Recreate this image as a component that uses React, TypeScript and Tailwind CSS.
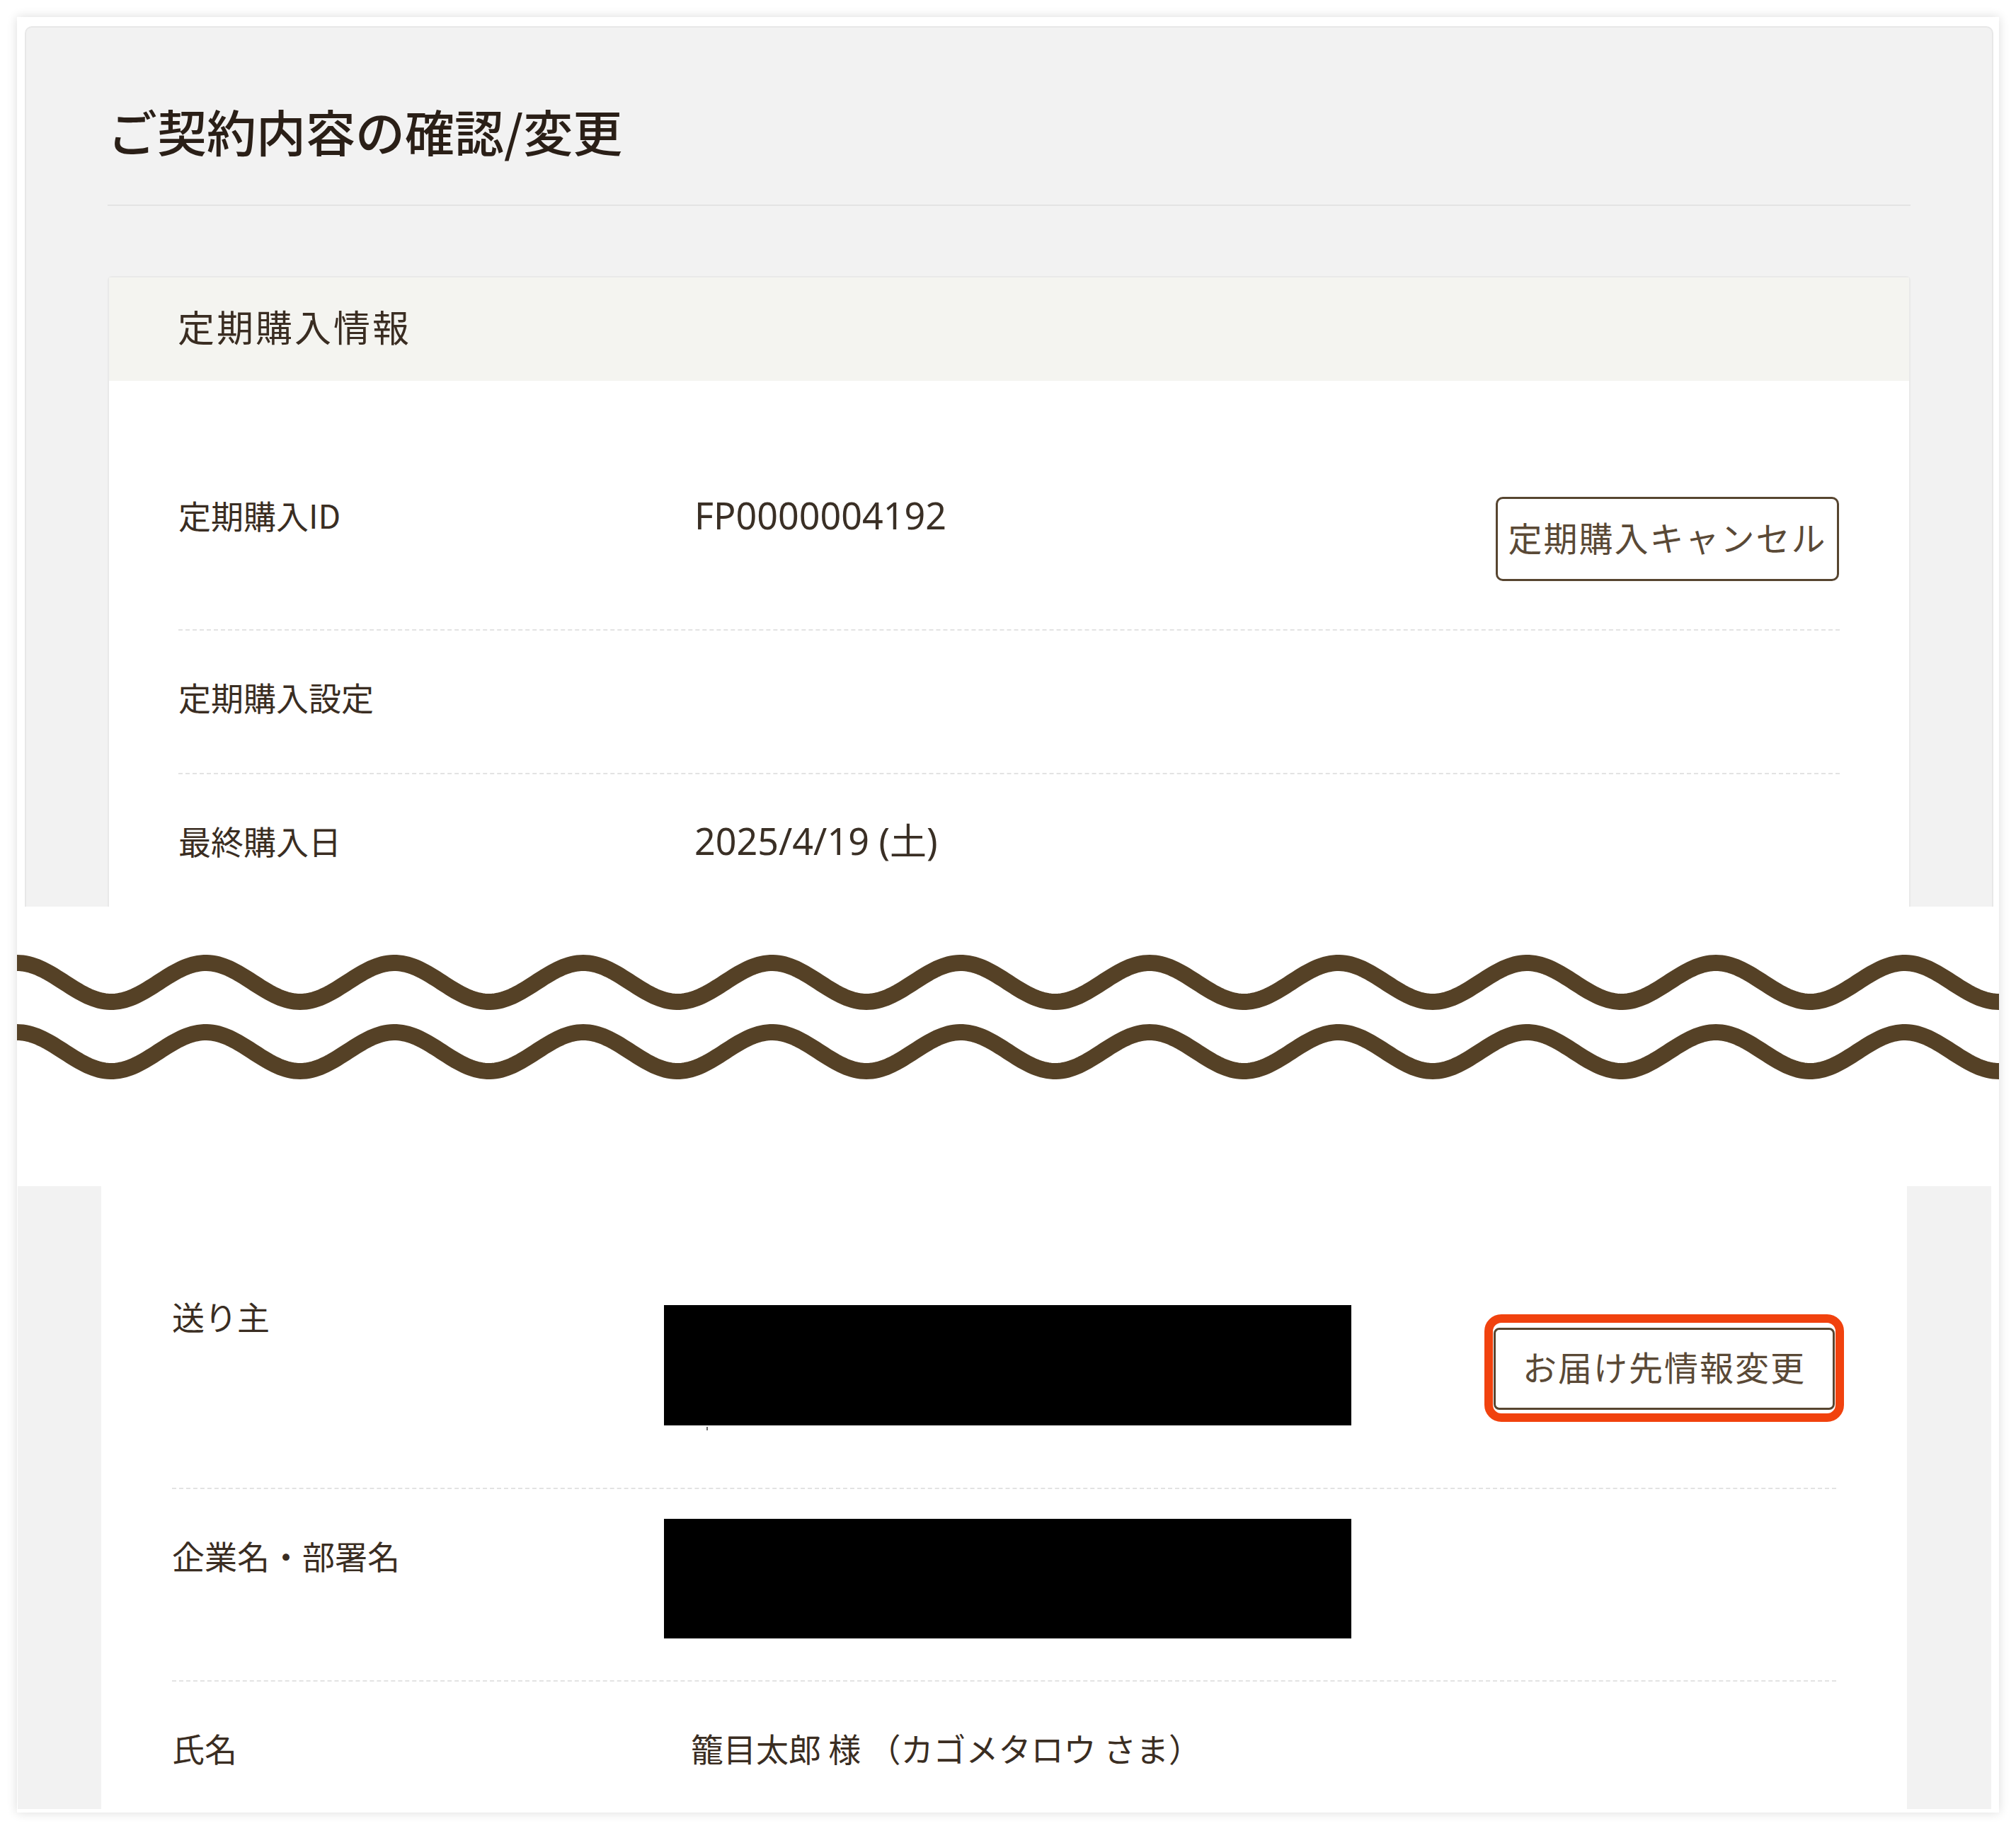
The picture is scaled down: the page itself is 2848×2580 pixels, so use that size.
import React from "react";

function wavePath(cy: number, amp: number, width: number, period: number) {
  const pts: string[] = [];
  for (let x = -4; x <= width + 4; x += 4) {
    const y = cy - amp * Math.cos((2 * Math.PI * x) / period);
    pts.push(`${x === -4 ? "M" : "L"}${x.toFixed(1)} ${y.toFixed(2)}`);
  }
  return pts.join(" ");
}

function Wave() {
  const W = 2800;
  const P = W / 10.5;
  return (
    <svg width={W} height={395} viewBox={`0 0 ${W} 395`} className="block">
      <path d={wavePath(107, 27.5, W, P)} fill="none" stroke="#554126" strokeWidth={23} />
      <path d={wavePath(205, 27.5, W, P)} fill="none" stroke="#554126" strokeWidth={23} />
    </svg>
  );
}

const shift = "-mt-[7px] mb-[7px]";
const labelCls = `shrink-0 ${shift} text-[46px] leading-[69px] text-[#3a2d22] font-[Noto_Sans_CJK_JP,sans-serif]`;
const valueLatin = `flex-1 ${shift} text-[52px] leading-[69px] text-[#3a2f25] font-[Noto_Sans,Noto_Sans_CJK_JP,sans-serif]`;
const valueJa = `flex-1 ${shift} text-[46px] leading-[69px] text-[#3a2d22] font-[Noto_Sans_CJK_JP,sans-serif]`;

export default function App() {
  return (
    <div className="w-[2848px] h-[2580px] bg-white pt-[24px] pl-[24px] font-[Noto_Sans_CJK_JP,sans-serif]">
      <div className="w-[2800px] bg-white shadow-[0_0_14px_rgba(0,0,0,0.14)] flex flex-col pb-[5px]">
        {/* Top part */}
        <div className="pt-[13px] pl-[11px] pr-[8px]">
          <div className="h-[1244px] overflow-hidden bg-[#f2f2f2] border-2 border-b-0 border-[#e7e7e7] rounded-t-[10px] pt-[93px] pl-[115px] pr-[115px]">
            <h1 className="text-[70px] leading-[105px] font-medium text-[#2a1f17]">ご契約内容の確認/変更</h1>
            <div className="mt-[52px] h-[2px] bg-[#e4e4e4]" />
            <div className="mt-[99px] bg-white border-2 border-b-0 border-[#e9e9e9] rounded-t-[6px]">
              <div className="h-[146px] bg-[#f4f4f0] flex items-center pl-[97px] pb-[8px]">
                <span className="text-[52px] tracking-[3px] text-[#3a2d22]">定期購入情報</span>
              </div>
              <div className="pt-[96px] pl-[98px] pr-[98px]">
                <div className="flex items-start py-[66px]">
                  <div className={`${labelCls} w-[729px]`}>定期購入ID</div>
                  <div className={valueLatin}>FP0000004192</div>
                  <button className="my-[2px] mr-[1px] w-[485px] h-[119px] pb-[8px] border-[3px] border-[#574530] rounded-[10px] bg-white flex items-center justify-center text-[48px] tracking-[2px] text-[#5a4936]">
                    定期購入キャンセル
                  </button>
                </div>
                <div className="flex items-start py-[66px] border-t-2 border-dashed border-[#e3e3e3]">
                  <div className={`${labelCls} w-[729px]`}>定期購入設定</div>
                  <div className={valueLatin}></div>
                </div>
                <div className="flex items-start py-[66px] border-t-2 border-dashed border-[#e3e3e3]">
                  <div className={`${labelCls} w-[729px]`}>最終購入日</div>
                  <div className={valueLatin}>2025/4/19 (土)</div>
                </div>
              </div>
            </div>
          </div>
        </div>

        {/* Cut band */}
        <div className="h-[395px] bg-white">
          <Wave />
        </div>

        {/* Bottom part */}
        <div className="h-[880px] ml-[1px] mr-[11px] bg-[#f2f2f2] pl-[118px] pr-[119px] overflow-hidden">
          <div className="h-full bg-white pt-[90px] pl-[100px] pr-[100px]">
            <div className="flex items-start py-[66px]">
              <div className={`${labelCls} w-[733px]`}>送り主</div>
              <div className="flex-1 h-[204px] pt-[12px]">
                <div className="-ml-[38px] w-[971px] h-[170px] bg-black" />
                <div className="ml-[22px] mt-[2px] w-[2px] h-[5px] bg-[#6a6a6a]" />
              </div>
              <div className="relative self-center mr-[2px]">
                <div className="absolute -left-[13px] -right-[13px] -top-[19px] -bottom-[17px] border-[12px] border-[#f1420e] rounded-[24px]" />
                <button className="relative w-[482px] h-[116px] pb-[8px] border-[3px] border-[#574530] rounded-[8px] bg-white flex items-center justify-center text-[48px] tracking-[2px] text-[#5a4936]">
                  お届け先情報変更
                </button>
              </div>
            </div>
            <div className="flex items-start py-[66px] border-t-2 border-dashed border-[#e3e3e3]">
              <div className={`${labelCls} w-[733px]`}>企業名・部署名</div>
              <div className="flex-1">
                <div className="-ml-[38px] -mt-[24px] -mb-[7px] w-[971px] h-[169px] bg-black" />
              </div>
            </div>
            <div className="flex items-start py-[66px] border-t-2 border-dashed border-[#e3e3e3]">
              <div className={`${labelCls} w-[733px]`}>氏名</div>
              <div className={valueJa}>籠目太郎 様 （カゴメタロウ さま）</div>
            </div>
          </div>
        </div>
      </div>
    </div>
  );
}
